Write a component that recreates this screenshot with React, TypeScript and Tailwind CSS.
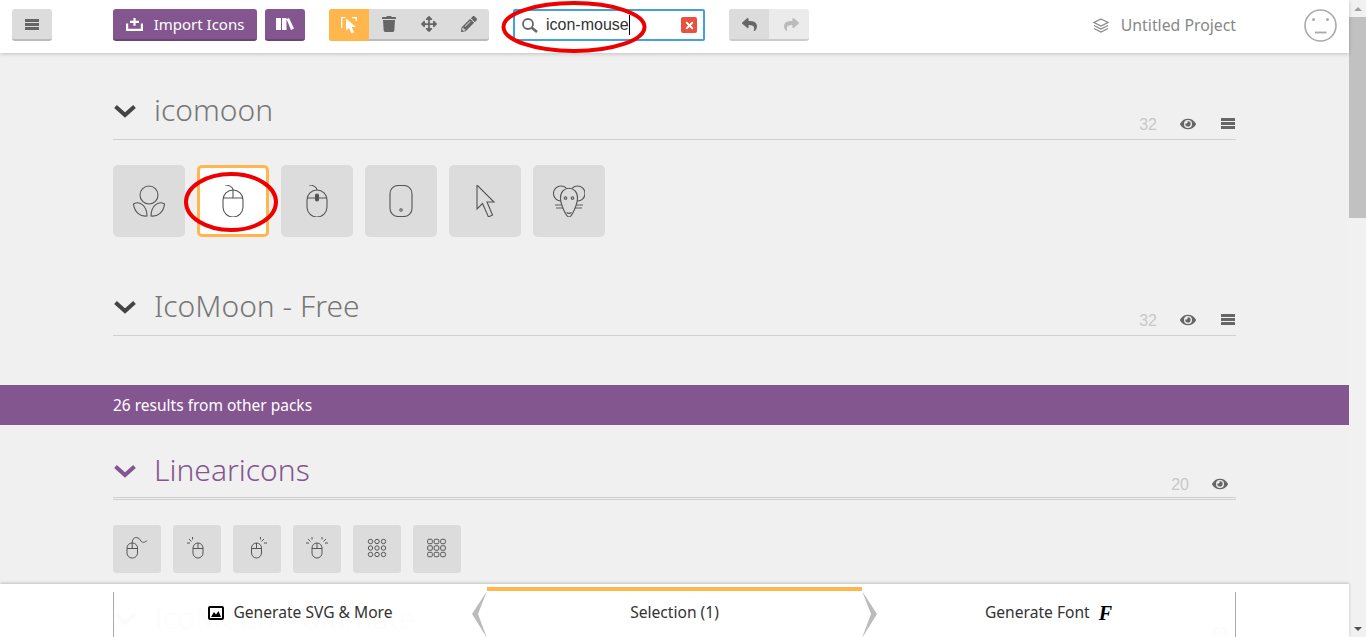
import { FaReply, FaShare, FaArrowsAlt, FaPencilAlt, FaTrash, FaEye, FaTimes } from "react-icons/fa";
import type { ReactNode } from "react";

const ui = "font-['Noto_Sans',sans-serif]";

function Chevron({ className }: { className: string }) {
    return (
        <svg width="24" height="14" viewBox="0 0 24 14" fill="none" className={className}>
            <path d="M2.5 2.5 12 11 21.5 2.5" stroke="currentColor" strokeWidth="4" />
        </svg>
    );
}

function Bars() {
    return (
        <svg width="14" height="11" viewBox="0 0 14 11" fill="currentColor">
            <path d="M0 0h14v3H0zM0 4h14v3H0zM0 8h14v3H0z" />
        </svg>
    );
}

function SectionHead({ title, count, purple, bars = true, double }: { title: string; count: number; purple?: boolean; bars?: boolean; double?: boolean }) {
    return (
        <div className={`relative flex h-[53px] items-start ${double ? "border-b-[3px] border-double border-[#cfcfcf]" : "border-b border-[#d0d0d0]"}`}>
            <Chevron className={`mt-[17px] ${purple ? "text-[#84568f]" : "text-[#444]"}`} />
            <h2 className={`ml-[17px] text-[30px] leading-[46px] font-light ${purple ? "text-[#84568f]" : "text-[#777]"}`}>{title}</h2>
            <div className={`ml-auto flex h-full items-center gap-[23px] font-['Liberation_Sans',sans-serif] text-[16px] text-[#c8c8c8] ${double ? "pt-[23px]" : "pt-[21px]"} ${bars ? "pr-px" : "pr-2"}`}>
                <span className="pt-[2px]">{count}</span>
                <span className="flex items-center gap-[25px] text-[#666]">
                    <FaEye size={16} />
                    {bars && <Bars />}
                </span>
            </div>
        </div>
    );
}

function Tile({ size = 72, selected, children }: { size?: 72 | 48; selected?: boolean; children: ReactNode }) {
    const box = size === 72 ? "h-[72px] w-[72px] rounded-[5px]" : "h-12 w-12 rounded-[3px]";
    return (
        <div className={`flex items-center justify-center ${box} ${selected ? "border-[3px] border-[#ffb74d] bg-white" : "bg-[#dcdcdc]"}`}>
            {children}
        </div>
    );
}

function Icon32({ children }: { children: ReactNode }) {
    return (
        <svg width="32" height="32" viewBox="0 0 32 32" fill="none" stroke="#555" strokeWidth="1.1">
            {children}
        </svg>
    );
}

function SmallIcon({ children }: { children: ReactNode }) {
    return (
        <svg width="24" height="24" viewBox="0 0 24 24" fill="none" stroke="#555" strokeWidth="1">
            {children}
        </svg>
    );
}

const dots = [4.5, 11, 17.5].flatMap((y) => [5.5, 12, 18.5].map((x) => [x, y]));

export default function App() {
    return (
        <div className={`relative flex h-[637px] w-[1366px] overflow-hidden bg-[#f0f0f0] ${ui}`}>
            <div className="relative h-full w-[1349px]">
                {/* top bar */}
                <header className="relative z-10 flex h-[53px] items-start bg-white pt-[9px] pl-3 shadow-[0_1px_4px_rgba(0,0,0,0.2)]">
                    <button className="flex h-8 w-10 items-center justify-center rounded-[3px] border-b-2 border-[#bbb] bg-[#dcdcdc] text-[#666]">
                        <Bars />
                    </button>
                    <button className="ml-[61px] flex h-8 w-[144px] items-center justify-center gap-[11px] rounded-[3px] border-b-2 border-[#6e4378] bg-[#84568f] text-[15px] text-white">
                        <svg width="17" height="13" viewBox="0 0 17 13" fill="white">
                            <path d="M7.4 0h2.2v2.8H13v2.1H9.6v2.9H7.4V4.9H4V2.8h3.4zM0 5.5h2.2v5.3h12.6V5.5H17V13H0z" />
                        </svg>
                        Import Icons
                    </button>
                    <button className="ml-2 flex h-8 w-10 items-center justify-center rounded-[3px] border-b-2 border-[#6e4378] bg-[#84568f]">
                        <svg width="18" height="12" viewBox="0 0 18 12" fill="white">
                            <path d="M0 0h5v12H0zM6 0h4.5v12H6zM10.5 1 13 0l5 10.5-3 1.5z" />
                        </svg>
                    </button>
                    <div className="ml-6 flex h-8 w-40 rounded-[3px] border-b-2 border-[#bbb] bg-[#dcdcdc] text-[#666]">
                        <span className="-mb-[2px] flex h-8 w-10 items-center justify-center rounded-l-[3px] bg-[#ffb74d]">
                            <svg width="16" height="17" viewBox="0 0 16 17" fill="none">
                                <path d="M.7 11V.7H4M11 .7h4.3V4" stroke="white" strokeWidth="1.3" />
                                <path d="M5 1.5v12l3-2.5 2.5 5.5 2.6-1.2L10.6 10H15z" fill="white" />
                            </svg>
                        </span>
                        <span className="flex w-10 items-center justify-center"><FaTrash size={16} /></span>
                        <span className="flex w-10 items-center justify-center"><FaArrowsAlt size={16} /></span>
                        <span className="flex w-10 items-center justify-center"><FaPencilAlt size={16} /></span>
                    </div>
                    <div className="ml-6 flex h-8 w-[192px] items-center rounded-[2px] border-2 border-[#42a0dc] pr-[6px] pl-[7px] font-['Liberation_Sans',sans-serif] text-[16px] text-[#333]">
                        <svg width="16" height="15" viewBox="0 0 16 15" fill="none" stroke="#666">
                            <circle cx="6" cy="6" r="5" strokeWidth="1.8" />
                            <path d="M9.8 9.8 15 14" strokeWidth="2.6" />
                        </svg>
                        <span className="ml-[8px] border-r border-black leading-[20px]">icon-mouse</span>
                        <span className="ml-auto flex h-4 w-4 items-center justify-center rounded-[2px] bg-[#e8513f] text-white"><FaTimes size={11} /></span>
                    </div>
                    <div className="ml-6 flex h-8 w-20 rounded-[3px] border-b-2 border-[#ccc] bg-[#ebebeb]">
                        <span className="flex w-10 items-center justify-center rounded-l-[3px] bg-[#dcdcdc] text-[#666]"><FaReply size={15} /></span>
                        <span className="flex w-10 items-center justify-center pl-[5px] text-[#bbb]"><FaShare size={15} /></span>
                    </div>
                    <div className="ml-auto flex h-8 items-center text-[#888]">
                        <svg width="16" height="15" viewBox="0 0 16 15" fill="none" stroke="currentColor" strokeWidth="1.2">
                            <path d="M8 1l7 3.5L8 8 1 4.5zM1 7.5 8 11l7-3.5M1 10.5 8 14l7-3.5" />
                        </svg>
                        <span className="ml-3 pt-[2px] text-[15.8px]">Untitled Project</span>
                    </div>
                    <svg width="33" height="33" viewBox="0 0 33 33" fill="none" stroke="#aaa" className="mr-[12px] ml-[68px]">
                        <circle cx="16.5" cy="16.5" r="15.5" strokeWidth="1.6" />
                        <circle cx="9.5" cy="10.5" r="1.5" fill="#aaa" stroke="none" />
                        <circle cx="23.5" cy="10.5" r="1.5" fill="#aaa" stroke="none" />
                        <path d="M11 23.5h11.5" strokeWidth="1.8" />
                    </svg>
                </header>

                {/* icon sets */}
                <main className="pt-[34px]">
                    <section className="mx-[113px]">
                        <SectionHead title="icomoon" count={32} />
                        <div className="mt-[25px] flex gap-3">
                            <Tile>
                                <Icon32>
                                    <circle cx="16" cy="10" r="9" />
                                    <path d="M.5 19C6 15.500 14 20 14 31 7 32 1.500 27 .5 19zM31.500 19C26 15.500 18 20 18 31c7 1 12.500-4 13.500-12z" />
                                </Icon32>
                            </Tile>
                            <Tile selected>
                                <Icon32>
                                    <rect x="6" y="5" width="20" height="27" rx="10" />
                                    <path d="M6 13h20M16 5v8M8 0c4 0 8 2 8 5" />
                                </Icon32>
                            </Tile>
                            <Tile>
                                <Icon32>
                                    <rect x="6" y="5" width="20" height="27" rx="10" />
                                    <path d="M6 13h20M8 0c4 0 8 2 8 5" />
                                    <rect x="14.5" y="9" width="3" height="7" rx="1.5" fill="#555" />
                                </Icon32>
                            </Tile>
                            <Tile>
                                <Icon32>
                                    <rect x="5" y="0.5" width="22" height="31" rx="8" />
                                    <circle cx="16" cy="25" r="1.2" />
                                </Icon32>
                            </Tile>
                            <Tile>
                                <Icon32>
                                    <path d="M8 0v24l5.500-5.500 6 13.500 4-2-5.500-13H25z" />
                                </Icon32>
                            </Tile>
                            <Tile>
                                <Icon32>
                                    <path d="M2 20h8M3 23h7M30 20h-8M29 23h-7" stroke="#888" strokeWidth="1.6" />
                                    <circle cx="8" cy="8.500" r="7.500" />
                                    <circle cx="24.500" cy="8.500" r="7.500" />
                                    <path d="M7.500 13c0-13 17-13 17 0 0 6-5.500 19-8.500 19S7.500 19 7.500 13z" fill="#dcdcdc" />
                                    <circle cx="12.500" cy="13" r="1.300" />
                                    <circle cx="19.500" cy="13" r="1.300" />
                                    <path d="M13.500 27.500c1.500 1 3.500 1 5 0" />
                                </Icon32>
                            </Tile>
                        </div>
                    </section>

                    <section className="mx-[113px] mt-[46px]">
                        <SectionHead title="IcoMoon - Free" count={32} />
                    </section>

                    <div className="mt-[49px] flex h-10 items-center bg-[#84568f] pt-[2px] pl-[113px] text-[15.5px] text-white">
                        26 results from other packs
                    </div>

                    <section className="mx-[113px] mt-[22px]">
                        <SectionHead title="Linearicons" count={20} purple bars={false} double />
                        <div className="mt-[25px] flex gap-3">
                            <Tile size={48}>
                                <SmallIcon>
                                    <rect x="2" y="6" width="10.500" height="15" rx="5" />
                                    <path d="M2 11.500h10.500M7.200 6V11.500M7.200 6c0-7 6-6.500 8-3s4.500 2.500 7 .5" />
                                </SmallIcon>
                            </Tile>
                            <Tile size={48}>
                                <SmallIcon>
                                    <rect x="8" y="6" width="10" height="15" rx="5" />
                                    <path d="M8 11.500h10M13 6v5.500M4 2l2.500 2.500M7.500 0v2.500M2 6h3" />
                                </SmallIcon>
                            </Tile>
                            <Tile size={48}>
                                <SmallIcon>
                                    <rect x="6.500" y="6" width="10" height="15" rx="5" />
                                    <path d="M6.500 11.500h10M11.500 6v5.500M19 2l-2.500 2.500M15.500 0v2.500M22 6h-3" />
                                </SmallIcon>
                            </Tile>
                            <Tile size={48}>
                                <SmallIcon>
                                    <rect x="7" y="6" width="10" height="15" rx="5" />
                                    <path d="M7 11.500h10M12 6v5.500M3 2l2.500 2.500M7 0v2.500M1 6h3M21 2l-2.500 2.500M17 0v2.500M23 6h-3" />
                                </SmallIcon>
                            </Tile>
                            <Tile size={48}>
                                <SmallIcon>
                                    {dots.map(([x, y]) => <circle key={`${x}-${y}`} cx={x} cy={y} r="2.200" />)}
                                </SmallIcon>
                            </Tile>
                            <Tile size={48}>
                                <SmallIcon>
                                    {dots.map(([x, y]) => <rect key={`${x}-${y}`} x={x - 2.800} y={y - 2.200} width="4.600" height="4.400" rx="1" />)}
                                </SmallIcon>
                            </Tile>
                        </div>
                    </section>

                    <section className="mx-[113px] mt-[22px]">
                        <SectionHead title="IcoMoon - Ultimate" count={20} bars={false} />
                    </section>
                </main>

                {/* bottom tabs */}
                <footer className="absolute inset-x-0 bottom-0 z-10 h-[53px] bg-white/[0.98] shadow-[0_-1px_3px_rgba(0,0,0,0.2)]">
                    <div className="mx-[113px] flex h-full text-[15.6px] text-[#333]">
                        <div className="mt-2 flex w-[374px] items-center justify-center gap-[9px] border-l border-[#aaa] pb-[3px]">
                            <svg width="16" height="14" viewBox="0 0 16 14">
                                <rect x="1" y="1" width="14" height="12" rx="1" fill="white" stroke="black" strokeWidth="2" />
                                <path d="M3 11 6 6l2 2.500L10.500 5 13 11z" fill="black" />
                            </svg>
                            Generate SVG &amp; More
                        </div>
                        <div className="relative mt-[3px] flex w-[375px] items-center justify-center border-t-4 border-[#ffb74d] pb-[2px]">
                            <svg width="15" height="47" viewBox="0 0 15 47" className="absolute top-0 -left-[15px]">
                                <polygon points="15,0 0,23 15,47 6,23" fill="#bbb" />
                            </svg>
                            Selection (1)
                            <svg width="15" height="47" viewBox="0 0 15 47" className="absolute top-0 -right-[15px]">
                                <polygon points="0,0 15,23 0,47 9,23" fill="#bbb" />
                            </svg>
                        </div>
                        <div className="mt-2 flex w-[374px] items-center justify-center gap-[9px] border-r border-[#aaa] pb-[3px]">
                            Generate Font
                            <span className="font-['Liberation_Serif',serif] text-[20px] leading-none font-bold text-black italic">F</span>
                        </div>
                    </div>
                </footer>

                {/* annotations */}
                <svg width="1349" height="637" fill="none" stroke="#ee0000" strokeWidth="4" className="pointer-events-none absolute top-0 left-0 z-20">
                    <ellipse cx="574" cy="27" rx="70.500" ry="24" />
                    <ellipse cx="231" cy="202" rx="45" ry="28" />
                </svg>
            </div>

            {/* scrollbar */}
            <div className="flex w-[17px] flex-col items-center justify-between bg-[#f1f1f1]">
                <div className="flex h-[17px] w-full items-center justify-center bg-[#f1f1f1]">
                    <div className="h-0 w-0 border-x-4 border-b-4 border-x-transparent border-b-[#a0a0a0]" />
                </div>
                <div className="mb-auto h-[201px] w-full bg-[#c1c1c1]" />
                <div className="flex h-[17px] w-full items-center justify-center">
                    <div className="h-0 w-0 border-x-4 border-t-4 border-x-transparent border-t-[#505050]" />
                </div>
            </div>
        </div>
    );
}
